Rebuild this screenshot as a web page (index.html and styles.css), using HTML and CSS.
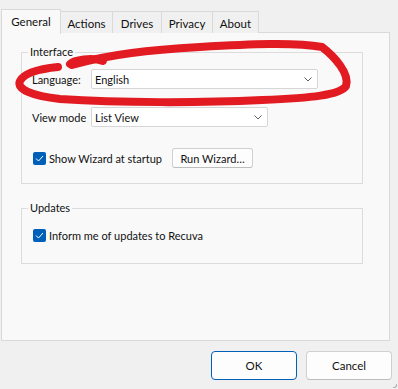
FILE: index.html
```html
<!DOCTYPE html>
<html>
<head>
<meta charset="utf-8">
<link rel="stylesheet" href="styles.css">
</head>
<body>
<div class="dialog">
  <div class="tabs">
    <div class="tab tab-active tab-general">General</div>
    <div class="tab tab-actions">Actions</div>
    <div class="tab tab-drives">Drives</div>
    <div class="tab tab-privacy">Privacy</div>
    <div class="tab tab-about">About</div>
  </div>
  <div class="panel">
    <fieldset class="group group-interface">
      <legend>Interface</legend>
      <div class="row">
        <span class="label">Language:</span>
        <div class="select select-lang"><span>English</span><svg class="chev" width="8" height="5" viewBox="0 0 8 5"><path d="M0.5 0.5 L4 4 L7.5 0.5" fill="none" stroke="#5f5f5f" stroke-width="1"/></svg></div>
      </div>
      <div class="row row-view">
        <span class="label">View mode</span>
        <div class="select select-view"><span>List View</span><svg class="chev" width="8" height="5" viewBox="0 0 8 5"><path d="M0.5 0.5 L4 4 L7.5 0.5" fill="none" stroke="#5f5f5f" stroke-width="1"/></svg></div>
      </div>
      <div class="row row-wizard">
        <span class="check"><svg width="9" height="7" viewBox="0 0 9 7"><path d="M1 3.5 L3.5 6 L8 1" fill="none" stroke="#fff" stroke-width="1"/></svg></span>
        <span class="check-text">Show Wizard at startup</span>
        <button class="btn btn-wizard">Run Wizard…</button>
      </div>
    </fieldset>
    <fieldset class="group group-updates">
      <legend>Updates</legend>
      <div class="row row-update">
        <span class="check"><svg width="9" height="7" viewBox="0 0 9 7"><path d="M1 3.5 L3.5 6 L8 1" fill="none" stroke="#fff" stroke-width="1"/></svg></span>
        <span class="check-text">Inform me of updates to Recuva</span>
      </div>
    </fieldset>
  </div>
  <div class="actions">
    <button class="btn btn-main btn-ok">OK</button>
    <button class="btn btn-main">Cancel</button>
  </div>
  <svg class="scribble" width="398" height="389" viewBox="0 0 398 389">
    <path d="M70 64 C 74 60, 92 57, 103 61 M72 65 C 110 54, 150 50, 200 47 C 250 44, 295 42, 322 47 C 335 57, 350 74, 346 86 C 340 95, 312 98, 262 100 C 200 103, 120 103, 60 99 C 32 96, 16 89, 20 81 C 24 73, 38 69, 58 67" fill="none" stroke="#e21b22" stroke-width="8" stroke-linecap="round" stroke-linejoin="round"/>
  </svg>
  <div class="grip"></div>
</div>
</body>
</html>
```
FILE: styles.css
```css
* { box-sizing: border-box; }
html, body { margin: 0; padding: 0; }
body {
  width: 398px;
  height: 389px;
  background: #f0f0f0;
  font-family: Lato, "Noto Sans", sans-serif;
  font-size: 11px;
  color: #111;
  overflow: hidden;
  white-space: nowrap;
}
.dialog {
  position: relative;
  width: 398px;
  height: 389px;
  padding-top: 8px;
}
.tabs {
  display: flex;
  align-items: flex-end;
  padding-left: 1px;
  height: 25px;
  position: relative;
  z-index: 2;
  font-size: 11.5px;
}
.tab {
  height: 22px;
  border: 1px solid #d9d9d9;
  border-bottom: none;
  margin-left: -1px;
  background: #f0f0f0;
  display: flex;
  align-items: center;
  justify-content: center;
  padding-top: 1px;
}
.tab:first-child { margin-left: 0; }
.tab-active {
  height: 25px;
  background: #f9f9f9;
  padding-top: 0;
  padding-bottom: 2px;
  margin-bottom: -1px;
  position: relative;
  z-index: 3;
}
.tab-general { width: 60px; }
.tab-actions { width: 53px; }
.tab-drives { width: 50px; }
.tab-privacy { width: 52px; }
.tab-about { width: 47px; }
.panel {
  margin-left: 1px;
  width: 389px;
  height: 309px;
  margin-top: -1px;
  background: #f9f9f9;
  border: 1px solid #d9d9d9;
  padding: 11px 0 0 19px;
  position: relative;
  z-index: 1;
}
.group {
  width: 342px;
  margin: 0;
  border: 1px solid #dcdcdc;
  padding: 0 0 0 10px;
}
.group legend {
  margin-left: -4px;
  padding: 0 2px;
  line-height: 16px;
  height: 16px;
}
.group-interface { height: 140px; padding-top: 9px; }
.group-updates { height: 64px; margin-top: 16px; padding-top: 9px; }
.row {
  display: flex;
  align-items: center;
  height: 20px;
}
.row-view { margin-top: 18px; }
.row-wizard { margin-top: 21px; }
.label { width: 59px; flex: none; }
.select {
  height: 20px;
  background: #fff;
  border: 1px solid #d6d6d6;
  border-radius: 2px;
  display: flex;
  align-items: center;
  justify-content: space-between;
  padding: 0 5px 0 3px;
}
.select-lang { width: 227px; }
.select-view { width: 177px; }
.chev { display: block; margin-top: 1px; }
.check {
  width: 13px;
  height: 13px;
  background: #005fb8;
  border-radius: 2px;
  display: flex;
  align-items: center;
  justify-content: center;
  flex: none;
  margin-left: 1px;
}
.check svg { display: block; }
.check-text { margin-left: 3px; }
.btn {
  font-family: inherit;
  font-size: 11px;
  color: #111;
  background: #fdfdfd;
  border: 1px solid #d0d0d0;
  border-bottom-color: #bdbdbd;
  border-radius: 3px;
  padding: 0;
}
.btn-wizard {
  width: 81px;
  height: 20px;
  margin-left: 10px;
}
.actions {
  display: flex;
  justify-content: flex-end;
  gap: 9px;
  padding-right: 6px;
  margin-top: 10px;
}
.btn-main {
  width: 86px;
  height: 29px;
  border-radius: 4px;
  font-size: 11.5px;
}
.btn-ok {
  border: 1px solid #005fb8;
}
.scribble {
  position: absolute;
  left: 0;
  top: 0;
  z-index: 5;
  pointer-events: none;
}
.grip {
  position: absolute;
  right: 1px;
  bottom: 1px;
  width: 4px;
  height: 4px;
  border-right: 1px solid #b0b0b0;
  border-bottom: 1px solid #b0b0b0;
  border-bottom-right-radius: 3px;
}
```
